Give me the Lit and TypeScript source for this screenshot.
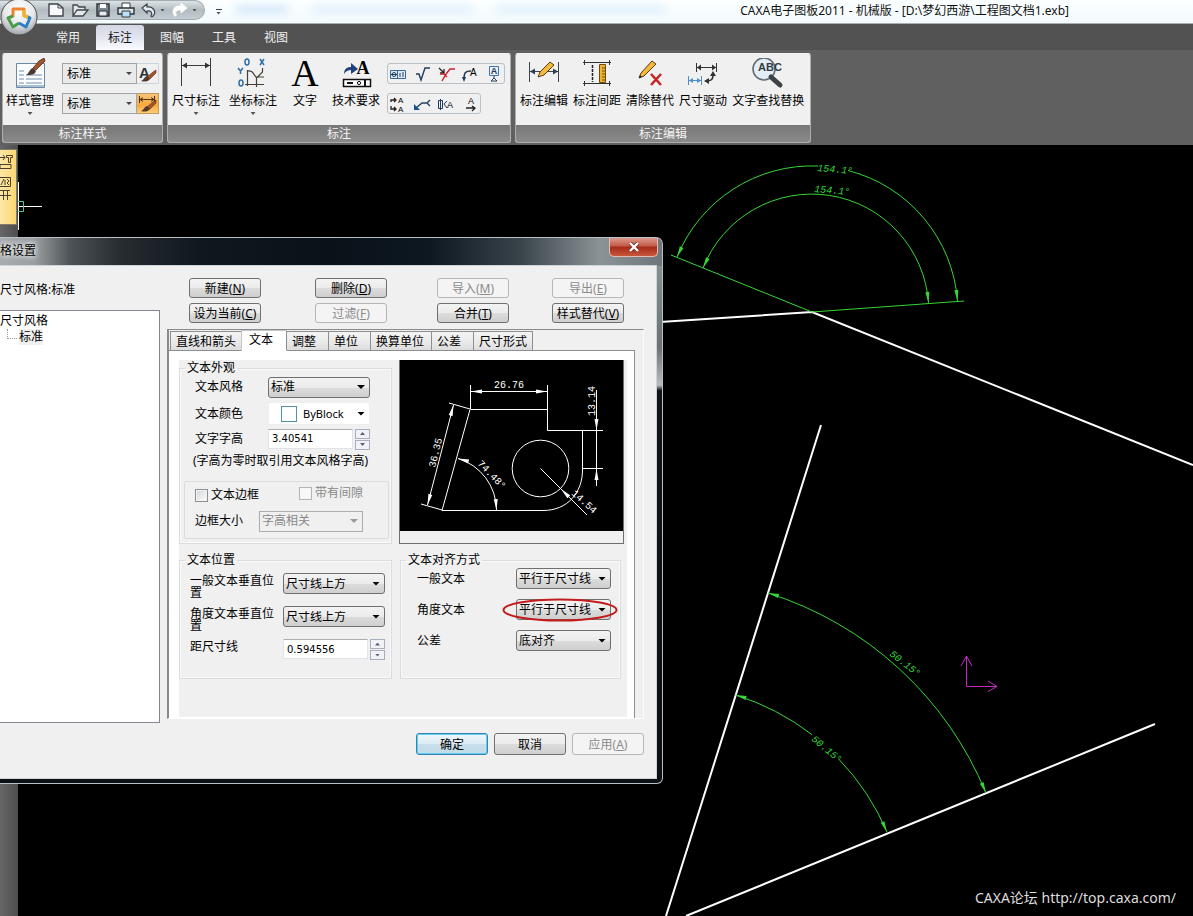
import { LitElement, html, css, svg, TemplateResult } from "lit";
import { customElement } from "lit/decorators.js";
import { classMap } from "lit/directives/class-map.js";

/* ---------- Icons ---------- */

const logo = html`<svg viewBox="0 0 38 38" class="fill" aria-hidden="true">
  <defs>
    <radialGradient id="orb" cx=".5" cy=".3" r=".75">
      <stop offset="0" stop-color="#fff" /><stop offset=".55" stop-color="#e6e8ea" /><stop offset="1" stop-color="#8f969b" />
    </radialGradient>
  </defs>
  <circle cx="19" cy="19" r="18" fill="url(#orb)" stroke="#4b4b4b" />
  <g fill="none" stroke-width="3" stroke-linejoin="round">
    <path d="M13 19V11h11v7" stroke="#ee8430" />
    <path d="M13 18l-5 2 5 9 6-4" stroke="#4e9c4b" />
    <path d="M25 18l5 2-4 9-7-4" stroke="#2b7fc4" />
    <path d="M24 12v6l4 1" stroke="#f1b52c" />
  </g>
</svg>`;

const brush = svg`<path d="M22 3l5-3 1 3-9 9-3-2z" fill="#a4552c" stroke="#43241a" stroke-width=".8"/><path d="M16 10l3 3c-1 4-5 4-10 4 3-1 3-6 7-7z" fill="#4c382f"/>`;

const smallBrush = svg`<path d="M19 9l3-2v3l-6 6-3-2z" fill="#a4552c" stroke="#5b2d17" stroke-width=".6"/><path d="M13 13l3 3c-2 3-6 3-9 2 3-1 3-4 6-5z" fill="#55392c"/>`;

const icons: Record<string, TemplateResult> = {
  newDoc: html`<svg width="18" height="16" viewBox="0 0 18 16"><path d="M2 2h9l5 4v8H2z" fill="#f7f8fa" stroke="#3f444b" stroke-width="1.4" /><path d="M11 2v4h5" fill="none" stroke="#3f444b" /></svg>`,
  open: html`<svg width="18" height="16" viewBox="0 0 18 16"><path d="M2 14V3h4l2 2h6v3M2 14l4-6h11l-5 6z" fill="#e4e8ed" stroke="#3f444b" stroke-width="1.3" /></svg>`,
  save: html`<svg width="16" height="16" viewBox="0 0 16 16"><path d="M2 2h12v12H2z" fill="#7c858e" stroke="#2e3338" stroke-width="1.4" /><path d="M5 2h6v4H5z" fill="#fff" /><path d="M4 9h8v5H4z" fill="#e7eaee" stroke="#2e3338" /></svg>`,
  print: html`<svg width="18" height="16" viewBox="0 0 18 16"><path d="M5 1h8v6H5z" fill="#fff" stroke="#363b41" /><path d="M1 6h16v6H1z" fill="#dce1e6" stroke="#2e3338" stroke-width="1.4" /><path d="M5 9h8v6H5z" fill="#b9e1f5" stroke="#363b41" /></svg>`,
  undo: html`<svg width="16" height="16" viewBox="0 0 16 16"><path d="M1 6l5-4v3c6-1 10 5 6 9-1 1-2 1-2 0 2-3 0-6-4-5v2z" fill="#e6eef4" stroke="#3f444b" stroke-width="1.2" /></svg>`,
  redo: html`<svg width="18" height="16" viewBox="0 0 18 16"><path d="M16 6l-6-5v3C4 3 0 8 3 13c1 2 3 1 2-1-1-3 1-4 5-4v3z" fill="#fff" stroke="#f7f9fa" /></svg>`,
  styleManage: html`<svg width="34" height="34" viewBox="0 0 34 34"><path d="M3.500 5.500h28v24h-28z" fill="#fbfcfe" stroke="#6b88a5" /><path d="M4 27h27v2H4z" fill="#a9bfd3" /><path d="M6 13h5M6 17h5M6 21h5M6 25h5M13 17h16M13 21h16M13 25h16" stroke="#6f8eae" /><g transform="translate(4 0)">${brush}</g></svg>`,
  dim: html`<svg width="34" height="34" viewBox="0 0 34 34"><path d="M2.500 0v28M31.500 0v28M3 7.500h28" stroke="#3c3c3c" fill="none" /><path d="M3 7.500l5-3v6zM31 7.500l-5-3v6z" fill="#333" /></svg>`,
  coord: html`<svg width="34" height="34" viewBox="0 0 34 34"><path d="M11.500 12v16M9 26.500h19M11 13c6-1 6 3 9 6h8M20.500 29v-9l6-6v-4" stroke="#45403a" fill="none" stroke-width="1.200" /><g stroke="#2e6da8" stroke-width="1.500" fill="none"><ellipse cx="11" cy="4" rx="2" ry="3" /><path d="M24 1l4 6M28 1l-4 6M2 10l2.500 3 2.500-3M4.500 13v3" /><ellipse cx="5" cy="25" rx="2" ry="3" /></g></svg>`,
  letter: html`<svg width="34" height="34" viewBox="0 0 34 34" overflow="visible"><text x="17" y="28" text-anchor="middle" font-family="Liberation Serif, serif" font-size="38">A</text></svg>`,
  tech: html`<svg width="34" height="34" viewBox="0 0 34 34"><path d="M5 16c0-6 4-7 7-7V5l7 6-7 5v-4c-3 0-5 1-7 4z" fill="#20427a" /><text x="24" y="16" text-anchor="middle" font-family="Liberation Serif, serif" font-weight="700" font-size="18">A</text><path d="M4.500 21.500h27v7h-27z" fill="#fff" stroke="#111" stroke-width="1.500" /><path d="M8 25h6M26 22v6" stroke="#111" stroke-width="2" /><circle cx="20" cy="25" r="1.600" fill="none" stroke="#111" /></svg>`,
  dimEdit: html`<svg width="34" height="34" viewBox="0 0 34 34"><path d="M2.500 4v20M31.500 4v20M3 13.500h28" stroke="#3c4450" fill="none" /><path d="M3 13.500l5-3v6zM31 13.500l-5-3v6z" fill="#333c48" /><path d="M11 19l2-5L23 4l4 3-10 10z" fill="#f6b93b" stroke="#5a3b12" /></svg>`,
  dimGap: html`<svg width="34" height="34" viewBox="0 0 34 34"><path d="M3 4.500h28M3 25.500h28M4.500 2v5M29.500 2v5M4.500 23v5M29.500 23v5" stroke="#333" fill="none" /><path d="M12.500 7v17" stroke="#222" stroke-dasharray="3 1" stroke-width="1.500" /><path d="M19.500 6.500h6v18h-6z" fill="#f5b52a" stroke="#6d4b12" /><path d="M22 10h3M22 13h3M22 16h3M22 19h3M22 22h3" stroke="#6d4b12" /></svg>`,
  clear: html`<svg width="34" height="34" viewBox="0 0 34 34"><path d="M6 20l2-5L19 3l4 3-12 12z" fill="#f6b93b" stroke="#5a3b12" /><path d="M6 20l1-3 2 2z" fill="#222" /><path d="M18 16l10 11M28 16L18 27" stroke="#c52525" stroke-width="2.600" /></svg>`,
  drive: html`<svg width="34" height="34" viewBox="0 0 34 34"><path d="M10.500 5v9M30.500 5v9M11 9.500h19" stroke="#333" fill="none" /><path d="M11 9.500l4-3v6zM30 9.500l-4-3v6z" fill="#333" /><path d="M2.500 18v9M15.500 18v9M3 22.500h12" stroke="#4d8dc9" fill="none" /><path d="M3 22.500l4-2.500v5zM15 22.500l-4-2.500v5z" fill="#4d8dc9" /><path d="M20 23c6 0 7-2 7-6" stroke="#333" stroke-width="1.600" fill="none" /><path d="M18 23l5-3v6zM27 13l-3 5h6z" fill="#333" /></svg>`,
  find: html`<svg width="34" height="34" viewBox="0 0 34 34"><circle cx="13" cy="11" r="11" fill="#e3eef5" stroke="#646c72" stroke-width="1.600" /><path d="M20 19l9 8" stroke="#3c4247" stroke-width="5" stroke-linecap="round" /><text x="19" y="13" text-anchor="middle" font-family="Liberation Sans, sans-serif" font-weight="700" font-size="11" fill="#333b42">ABC</text></svg>`,
  aBrush: html`<svg width="22" height="22" viewBox="0 0 22 22"><text x="3" y="15" font-family="Liberation Sans, sans-serif" font-weight="700" font-size="15" fill="#2e3438">A</text><g transform="translate(-2)">${smallBrush}</g></svg>`,
  dimBrush: html`<svg width="22" height="22" viewBox="0 0 22 22"><path d="M3.500 3v7M18.500 3v7M4 6.500h14M4 6.500l3-2M4 6.500l3 2M18 6.500l-3-2M18 6.500l-3 2" stroke="#503415" fill="none" /><g transform="translate(-2)">${smallBrush}</g></svg>`,
  tolerance: html`<svg width="20" height="18" viewBox="0 0 20 18"><path d="M2.500 5.500h15v8h-15zM9.500 5.500v8" fill="#dce9f6" stroke="#3d6793" /><circle cx="6" cy="9.500" r="2" fill="none" stroke="#26415f" /><path d="M3 9.500h6M12 8v4M15 7v5" stroke="#26415f" /></svg>`,
  rough: html`<svg width="20" height="18" viewBox="0 0 20 18"><path d="M4 9h3l2 6 4-12h5" fill="none" stroke="#223a5c" stroke-width="1.400" /></svg>`,
  weld: html`<svg width="20" height="18" viewBox="0 0 20 18"><path d="M3 3l5 5M8 4v4H4" fill="none" stroke="#222" stroke-width="1.300" /><path d="M6 16l4-7M4 9h4l3 3M10 9l4-5h5" fill="none" stroke="#c8262c" stroke-width="1.500" /></svg>`,
  leader: html`<svg width="20" height="18" viewBox="0 0 20 18"><path d="M4 14c0-6 1-8 7-8" fill="none" stroke="#223a5c" stroke-width="1.400" /><path d="M4 17l-2-5h4z" fill="#223a5c" /><text x="10" y="11" font-family="Liberation Sans, sans-serif" font-size="10">A</text></svg>`,
  datum: html`<svg width="20" height="18" viewBox="0 0 20 18"><path d="M5.500 1.500h9v9h-9z" fill="#e9f1fa" stroke="#3f76ad" /><text x="10" y="9" text-anchor="middle" font-family="Liberation Sans, sans-serif" font-size="9" font-weight="700" fill="#223a5c">A</text><path d="M10 11v2M7 16l3-3 3 3z" stroke="#223a5c" fill="#fff" /></svg>`,
  cut: html`<svg width="20" height="18" viewBox="0 0 20 18"><path d="M3 7V5h5M3 11v3h5M6 3l2 2-2 2M6 12l2 2-2 2" fill="none" stroke="#222" stroke-width="1.300" /><text x="10" y="8" font-family="Liberation Sans, sans-serif" font-size="8">A</text><text x="10" y="17" font-family="Liberation Sans, sans-serif" font-size="8">A</text></svg>`,
  arrowLead: html`<svg width="20" height="18" viewBox="0 0 20 18"><path d="M4 13l6-5h5l3-3M15 8l3 3" fill="none" stroke="#26415f" stroke-width="1.400" /><path d="M2 15V9l6 6z" fill="#1d4f91" /></svg>`,
  section: html`<svg width="20" height="18" viewBox="0 0 20 18"><path d="M2.500 5.500h4v8h-4zM4.500 4v11M11 6l-3 3 3 4" fill="none" stroke="#223a5c" /><text x="11" y="13" font-family="Liberation Sans, sans-serif" font-size="9">A</text></svg>`,
  direction: html`<svg width="20" height="18" viewBox="0 0 20 18"><text x="11" y="9" text-anchor="middle" font-family="Liberation Sans, sans-serif" font-size="9">A</text><path d="M6 13h9M12 11l3 2-3 3" fill="none" stroke="#222" stroke-width="1.300" /></svg>`,
};

/* ---------- Shared control look ---------- */

const shared = css`
  * { box-sizing: border-box; }
  button, select, input { font: inherit; color: inherit; margin: 0; }
  button { padding: 0; border: 0; background: none; white-space: nowrap; }
  svg { display: block; }
  .fill { width: 100%; height: 100%; }
  .drop { display: grid; align-items: center; }
  .drop > select { grid-area: 1 / 1; width: 100%; appearance: none; border-radius: 0; outline: 0; }
  .drop::after {
    content: ""; grid-area: 1 / 1; justify-self: end; margin-right: 5px;
    width: 8px; height: 4px; background: currentColor;
    clip-path: polygon(0 0, 100% 0, 50% 100%); pointer-events: none;
  }
`;

/* ---------- Ribbon ---------- */

@customElement("app-ribbon")
export class AppRibbon extends LitElement {
  static styles = [shared, css`
    :host { display: block; background: #606060; position: relative; }
    .title { display: flex; height: 24px; background: linear-gradient(#fbffff, #f3fbfd); border-bottom: 1px solid #a9afb1; }
    .quick {
      display: flex; align-items: center; gap: 6px; height: 20px; width: 205px; padding: 0 4px 0 47px;
      border: 1px solid #a4acb1; border-left: 0; border-radius: 0 10px 10px 0;
      background: linear-gradient(#dde3e6, #b2bcc1 50%, #c4cdd1);
    }
    .quick button { flex: none; }
    .quick .tight { margin-right: -3px; }
    .mini { width: 5px; height: 3px; background: #555; clip-path: polygon(0 0, 100% 0, 50% 100%); }
    .more { align-self: center; margin: 0 14px 0 11px; padding-top: 2px; border-top: 1px solid #444; width: 6px; }
    .glass { display: flex; gap: 24px; align-items: center; filter: blur(4px); height: 18px; flex: 1; min-width: 0; overflow: hidden; }
    .glass i { height: 7px; background: #cfe4f9; width: 52px; }
    .glass i + i { width: 160px; background: #deeefb; }
    .glass i + i + i { width: 170px; }
    .caption { margin: 0 124px 0 0; font-size: 12px; line-height: 22px; color: #111; white-space: nowrap; font-weight: 400; }
    .orb { position: absolute; left: 0; top: -2px; width: 38px; height: 38px; z-index: 2; }
    .tabs { display: flex; padding: 1px 0 0 44px; height: 26px; background: #525252; color: #f0f0f0; }
    .tabs button { width: 48px; margin-right: 4px; line-height: 25px; border-radius: 3px 3px 0 0; }
    .tabs .on { color: #111; background: linear-gradient(#d3d7e2, #e3e6f0 50%, #fbfbff); }
    .groups { display: flex; gap: 4px; padding: 3px 2px 2px; height: 95px; }
    .group { border: 1px solid #f2f2f2; border-radius: 3px; overflow: hidden; display: flex; flex-direction: column; background: #f0f0f0; border-color: #f2f2f2 #adadad #adadad; }
    .tools { display: flex; flex: 1; padding: 4px 5px 0 4px; }
    .name { height: 17px; line-height: 17px; text-align: center; color: #f5f5f5; font-weight: 400; font-size: 12px; margin: 0; background: linear-gradient(#777, #8a8a8a); }
    .big { display: flex; flex-direction: column; align-items: center; line-height: 18px; height: 64px; }
    .big .mini { margin-top: 2px; }
    .pair { display: flex; flex-direction: column; align-items: flex-start; gap: 9px; margin: 5px 0 0 7px; }
    .g1 .tools { padding: 4px 3px 0; }
    .g1 .pair { margin-left: 8px; }
    .line { display: flex; height: 21px; }
    .line .drop { width: 75px; color: #444; }
    .line select { height: 21px; border: 1px solid #a0a4a8; background: #e9eaea; padding: 0 4px; color: #000; }
    .line .drop::after { width: 6px; height: 3px; }
    .line button { width: 22px; border: 1px solid #ccd5dc; border-left: 0; }
    .line svg { margin: -1px 0 0 -1px; }
    .line .lit { background: linear-gradient(#f6c478, #f9a83c 60%, #fdcf75); border-color: #c29a5c; }
    .g2 .big + .big { margin-left: 9px; }
    .g2 .big.text { width: 48px; margin-left: 4px; }
    .g2 .big.text + .big { margin-left: 3px; }
    .box { display: flex; align-items: center; gap: 4px; height: 21px; border: 1px solid #b9c0c6; border-radius: 3px; }
    .g3 .tools { gap: 5px; padding-right: 6px; }
  `];

  private big(icon: string, label: string, arrow = false, cls = "") {
    return html`<button class="big ${cls}">${icons[icon]}<span>${label}</span>${arrow ? html`<span class="mini"></span>` : ""}</button>`;
  }

  private tool(icon: string, label: string) {
    return html`<button aria-label=${label}>${icons[icon]}</button>`;
  }

  render() {
    return html`
      <button class="orb" aria-label="菜单">${logo}</button>
      <header class="title">
        <div class="quick">
          ${this.tool("newDoc", "新建")}${this.tool("open", "打开")}${this.tool("save", "保存")}${this.tool("print", "打印")}
          <button class="tight" aria-label="撤销">${icons.undo}</button><span class="mini"></span>
          <button class="tight" aria-label="恢复">${icons.redo}</button><span class="mini"></span>
        </div>
        <div class="more"><div class="mini"></div></div>
        <div class="glass"><i></i><i></i><i></i></div>
        <h1 class="caption">CAXA电子图板2011 - 机械版 - [D:\\梦幻西游\\工程图文档1.exb]</h1>
      </header>
      <nav class="tabs">
        ${["常用", "标注", "图幅", "工具", "视图"].map((t) => html`<button class=${classMap({ on: t === "标注" })}>${t}</button>`)}
      </nav>
      <div class="groups">
        <section class="group g1">
          <div class="tools">
            ${this.big("styleManage", "样式管理", true)}
            <div class="pair">
              <div class="line"><span class="drop"><select aria-label="文本样式"><option>标准</option></select></span><button aria-label="文本样式管理">${icons.aBrush}</button></div>
              <div class="line"><span class="drop"><select aria-label="尺寸样式"><option>标准</option></select></span><button class="lit" aria-label="尺寸样式管理">${icons.dimBrush}</button></div>
            </div>
          </div>
          <h2 class="name">标注样式</h2>
        </section>
        <section class="group g2">
          <div class="tools">
            ${this.big("dim", "尺寸标注", true)}${this.big("coord", "坐标标注", true)}${this.big("letter", "文字", false, "text")}${this.big("tech", "技术要求")}
            <div class="pair">
              <div class="box">${this.tool("tolerance", "形位公差")}${this.tool("rough", "粗糙度")}${this.tool("weld", "焊接符号")}${this.tool("leader", "引出说明")}${this.tool("datum", "基准代号")}</div>
              <div class="box">${this.tool("cut", "剖切符号")}${this.tool("arrowLead", "倒角标注")}${this.tool("section", "中心孔标注")}${this.tool("direction", "向视符号")}</div>
            </div>
          </div>
          <h2 class="name">标注</h2>
        </section>
        <section class="group g3">
          <div class="tools">
            ${this.big("dimEdit", "标注编辑")}${this.big("dimGap", "标注间距")}${this.big("clear", "清除替代")}${this.big("drive", "尺寸驱动")}${this.big("find", "文字查找替换")}
          </div>
          <h2 class="name">标注编辑</h2>
        </section>
      </div>`;
  }
}

/* ---------- Drawing ---------- */

/* Filled arrow head with its tip at (x, y); deg is the direction it points in. */
const head = (x: number, y: number, deg: number, len = 11) =>
  svg`<path d=${`M0 0L${-len} -2V2z`} transform=${`translate(${x} ${y}) rotate(${deg})`} fill="currentColor" stroke="none" />`;

const note = (x: number, y: number, deg: number, text: string) =>
  svg`<text transform=${`translate(${x} ${y}) rotate(${deg})`} class="dimtext">${text}</text>`;

@customElement("app-drawing")
export class AppDrawing extends LitElement {
  static styles = css`
    :host { display: block; background: #000; overflow: hidden; }
    svg { display: block; width: 100%; height: 100%; }
    .green { color: #36d636; stroke: currentColor; fill: none; stroke-width: 1; }
    .dimtext { font: italic 10px "Liberation Mono", monospace; fill: currentColor; stroke: none; }
    .white { stroke: #fff; fill: none; stroke-width: 2; }
  `;

  render() {
    return html`<svg aria-label="工程图">
      <g transform="translate(0 -145)">
        <g class="white">
          <path d="M660 322L812 312L1193 465" />
          <path d="M821 425L666 916M686 916L1155 724" />
        </g>
        <g class="green">
          <path d="M671 255L812 312L964 301" />
          <path d="M677 257A146 146 0 0 1 818 166M848 170.500A146 146 0 0 1 957.500 301" />
          <path d="M703 268A117 117 0 0 1 928.500 303" />
          <path d="M768 593A349 349 0 0 1 986 793" />
          <path d="M735.500 695A242 242 0 0 1 812 734.700M838.500 758.800A242 242 0 0 1 887 832" />
          ${head(677, 257, 115)}${head(957.5, 301, 84)}${head(703, 268, 116)}${head(928.5, 303, 84)}
          ${head(768, 593, 196)}${head(986, 793, 67)}${head(735.5, 695, 196)}${head(887, 832, 66)}
          ${note(817, 171, 5, "154.1°")}${note(814, 192, 5, "154.1°")}
          ${note(889, 655, 38, "50.15°")}${note(811, 740, 40, "50.15°")}
        </g>
        <path d="M966.500 656V686.500H997M961 666l5.500-10 5.500 10M988 681l9 5.500-9 5" fill="none" stroke="#c22ac2" />
        <path d="M18.500 182v48M18 206.500h24" stroke="#fff" />
        <path d="M18 201.500h5.500v10H18" fill="none" stroke="#4ccc88" />
      </g>
    </svg>`;
  }
}

/* ---------- Dimension style dialog ---------- */

@customElement("style-dialog")
export class StyleDialog extends LitElement {
  static styles = [shared, css`
    :host {
      display: block; padding: 0 6px 5px 0; border-radius: 0 7px 6px 0; border: 1px solid #b9c0c4; border-left: 0;
      background: linear-gradient(#8f989c, #6a7276 20%, #b8bcbd 27%, #10151a 28%, #0b1014);
      color: #000;
    }
    .bar {
      display: flex; justify-content: space-between; height: 28px; margin-right: -6px; border-radius: 0 6px 0 0;
      background: linear-gradient(90deg, #a9adaf 0, #9a9ea0 35px, #4d5356 70px, #262c30 120px, #10181f 200px, #0a1119 330px, #0d1820 430px, #39434a 520px, #8b9396 600px, #6d767a);
    }
    .bar h2 { margin: 0; font-size: 12px; font-weight: 400; line-height: 26px; text-shadow: 0 0 6px #fff, 0 0 4px #fff; }
    .close {
      width: 49px; height: 19px; margin-right: 4px; border: 1px solid #e6b9b2; border-top: 0; border-radius: 0 0 5px 5px;
      background: linear-gradient(#dc9a8d, #c25a48 45%, #a52a17 50%, #c8573b); display: grid; place-items: center;
    }
    .body { background: #f0f0f0; outline: 1px solid #d0d4d6; padding-bottom: 23px; }
    .main { display: flex; }
    .left { width: 160px; display: flex; flex-direction: column; }
    .left > p { margin: 0; line-height: 47px; height: 44px; }
    .tree { flex: 1; background: #fff; border: 1px solid #828790; border-left: 0; padding-top: 2px; margin-bottom: -4px; }
    .tree p { margin: 0; line-height: 16px; }
    .tree .leaf { display: flex; }
    .tree .leaf::before { content: ""; width: 9px; height: 9px; margin: 0 2px 0 7px; border: 1px dotted #999; border-width: 0 0 1px 1px; }
    .tree .leaf span { background: #f0f0f0; }
    .right { flex: 1; margin: 0 12px 0 7px; }
    .btn {
      height: 20px; line-height: 19px; border: 1px solid #707070; border-radius: 3px; text-align: center;
      background: linear-gradient(#f3f3f3, #ebebeb 50%, #dcdcdc 51%, #cfcfcf);
    }
    .btn:disabled { color: #8b8b8b; border-color: #b3b7b9; background: #f4f4f4; }
    .cmds { display: grid; grid-template-columns: 126px 122px 115px 72px; row-gap: 5px; padding: 12px 0 6px 22px; }
    .cmds .btn { width: 72px; }
    .frame { border: 2px solid #8a8a8a; border-right: 1px solid #fafafa; border-width: 1px 1px 1px 2px; border-bottom-color: #fff; padding-right: 8px; }
    .tabs { display: flex; align-items: flex-end; height: 20px; padding-left: 1px; position: relative; z-index: 1; }
    .tabs button {
      height: 19px; line-height: 19px; min-width: 43px; padding: 0 7px 0 5px; text-align: left; border: 1px solid #8c8e94; border-bottom: 0; margin-right: -1px;
      background: linear-gradient(#f4f4f4, #ebebeb 50%, #dcdcdc);
    }
    .tabs button:first-child, .tabs button:last-child { padding: 0 5px; }
    .tabs button.on { background: #fff; height: 21px; margin-bottom: -1px; line-height: 18px; padding: 0 13px 2px 7px; border-color: #c4c6c9; }
    .page { background: #fff; border: 1px solid #8c8e94; border-left: 0; border-bottom: 0; padding: 9px 7px 1px 10px; }
    .sheet { background: #f0f0f0; display: grid; grid-template-columns: 213px 1fr; column-gap: 7px; padding: 0 3px 38px 0; }
    fieldset { margin: 0; padding: 0; border: 1px solid #d9dde0; min-width: 0; box-shadow: inset 0 0 0 1px #f9f9f9; }
    legend { margin-left: 5px; padding: 0 2px; line-height: 16px; }
    .row { display: grid; align-items: center; }
    .look { height: 184px; }
    .look .rows { display: grid; gap: 4px; padding: 0 21px 0 15px; }
    .look .row { grid-template-columns: 73px 102px; height: 22px; }
    .hint { margin: 2px 0 0 13px; line-height: 18px; white-space: nowrap; }
    .dd select {
      height: 21px; border: 1px solid #707070; border-radius: 3px; padding: 0 2px;
      background: linear-gradient(#f3f3f3, #ebebeb 50%, #dcdcdc 51%, #cfcfcf);
    }
    .dd select:disabled { color: #888; background: #f0f0f0; border-color: #abadb3; opacity: 1; border-radius: 0; }
    .dd.off { color: #999; }
    .dd.plain select { background: #fff; border-color: #eee; padding-left: 34px; border-radius: 0; font: 11px "Noto Sans", sans-serif; height: 23px; }
    .dd.plain::before { content: ""; grid-area: 1 / 1; z-index: 1; width: 14px; height: 14px; margin-left: 13px; border: 1px solid #5591a3; background: #fff; }
    .spin { display: flex; gap: 2px; }
    .spin input { flex: 1; min-width: 0; height: 20px; border: 1px solid #e2e3ea; border-top-color: #abadb3; padding: 0 3px; background: #fff; font: 10px "DejaVu Sans", sans-serif; border-radius: 0; }
    .spin span { display: grid; width: 15px; gap: 1px; }
    .spin button { height: 10px; border: 1px solid #a9adc0; background: #f1f2f8; display: grid; place-items: center; }
    .spin i { width: 5px; height: 3px; background: #54607c; clip-path: polygon(0 0, 100% 0, 50% 100%); }
    .spin button:first-child i { clip-path: polygon(50% 0, 100% 100%, 0 100%); }
    .sub { margin: 11px 2px 0 4px; border: 1px solid #d9dde0; border-radius: 2px; height: 58px; padding: 2px 0 0 10px; }
    .checks { display: flex; gap: 40px; height: 24px; }
    .checks label { display: flex; align-items: center; gap: 3px; line-height: 20px; height: 22px; }
    .checks label + label { color: #888; height: 18px; }
    .checks input { appearance: none; width: 13px; height: 13px; border: 1px solid #8e8f8f; background: linear-gradient(135deg, #cfd4d9, #fff); outline: 1px solid #f4f4f4; outline-offset: -2px; }
    .checks label + label input { border-color: #b5b5b5; background: #f8f8f8; }
    .sub .row { grid-template-columns: 64px 104px; margin-top: 2px; }
    .preview { border: 1px solid #6f6f6f; border-width: 0 1px 1px; background: #f0f0f0; height: 184px; width: 225px; }
    .preview svg { background: #000; color: #fff; width: 100%; height: 171px; }
    .dimtext { font: 10px "Liberation Mono", monospace; fill: #fff; stroke: none; }
    .place, .align { margin-top: 8px; height: 127px; }
    .place .rows { display: grid; gap: 6px; padding: 5px 0 0 10px; }
    .place .row { grid-template-columns: 84px 102px; column-gap: 9px; line-height: 12px; align-items: start; min-height: 27px; }
    .place .row label { padding-top: 2px; }
    .align { width: 221px; margin-left: 1px; }
    .align .rows { display: grid; gap: 10px; padding-left: 16px; }
    .align .row { grid-template-columns: 99px 95px; }
    .ring { position: relative; }
    .ring svg { position: absolute; left: -14px; top: -1px; width: 116px; height: 24px; pointer-events: none; }
    .foot { display: flex; justify-content: flex-end; gap: 6px; padding: 14px 12px 0 0; }
    .foot .btn { width: 72px; height: 22px; line-height: 21px; }
    .foot .ok { border-color: #3c7fb1; box-shadow: inset 0 0 0 1px #5fd0f0; background: linear-gradient(#eef6fa, #ddecf4 50%, #c9dfeb 51%, #bfdbe9); }
  `];

  private cmd(text: string, key: string, off = false) {
    return html`<button class="btn" ?disabled=${off}>${text}(<u>${key}</u>)</button>`;
  }

  private pick(id: string, value: string) {
    return html`<span class="drop dd"><select id=${id}><option>${value}</option></select></span>`;
  }

  private spin(id: string, value: string) {
    return html`<div class="spin"><input id=${id} .value=${value} /><span><button aria-label="增加"><i></i></button><button aria-label="减少"><i></i></button></span></div>`;
  }

  private preview() {
    return html`<svg viewBox="400 360 223 171" preserveAspectRatio="xMidYMid slice" aria-label="预览">
      <g fill="none" stroke="#fff">
        <path d="M470.500 409.500H547.500V430.500H582.500V470C582.500 492 568 510.500 543 510.500H442L470 409.500" />
        <path d="M470.500 385V409M547.500 385V410M471 391.500H547M582 430.500H603M583 468.500H603M596.500 390V486" />
        <path d="M449 403L470 409M421 504L442 510M453.500 405L427.500 505" />
        <path d="M458 458.500A54 54 0 0 1 496.500 510" />
        <circle cx="540.500" cy="468.500" r="28.300" />
        <path d="M540.500 468.500L587 515" />
        ${head(471, 391.5, 180)}${head(547, 391.5, 0)}${head(596.5, 430, 90)}${head(596.5, 469, -90)}
        ${head(453.5, 405, -75)}${head(427.5, 505, 105)}${head(458, 458.5, 196)}${head(496.5, 510, 86)}${head(561, 489, 225)}
        ${note(494, 388, 0, "26.76")}${note(595, 416, -90, "13.14")}${note(435, 468, -76, "36.35")}${note(477, 464, 46, "74.48°")}${note(571, 494, 42, "14.54")}
      </g>
    </svg>`;
  }

  render() {
    const tabs = ["直线和箭头", "文本", "调整", "单位", "换算单位", "公差", "尺寸形式"];
    return html`
      <div class="bar"><h2>格设置</h2>
        <button class="close" aria-label="关闭"><svg width="12" height="10" viewBox="0 0 12 10"><path d="M2 1l8 8M10 1L2 9" stroke="#703028" stroke-width="4" /><path d="M2 1l8 8M10 1L2 9" stroke="#fff" stroke-width="2.400" /></svg></button>
      </div>
      <div class="body">
        <div class="main">
          <div class="left">
            <p>尺寸风格:标准</p>
            <div class="tree"><p>尺寸风格</p><p class="leaf"><span>标准</span></p></div>
          </div>
          <div class="right">
            <div class="cmds">
              ${this.cmd("新建", "N")}${this.cmd("删除", "D")}${this.cmd("导入", "M", true)}${this.cmd("导出", "E", true)}
              ${this.cmd("设为当前", "C")}${this.cmd("过滤", "F", true)}${this.cmd("合并", "T")}${this.cmd("样式替代", "V")}
            </div>
            <div class="frame">
              <div class="tabs">${tabs.map((t) => html`<button class=${classMap({ on: t === "文本" })}>${t}</button>`)}</div>
              <div class="page"><div class="sheet">
                <fieldset class="look">
                  <legend>文本外观</legend>
                  <div class="rows">
                    <div class="row"><label for="style">文本风格</label>${this.pick("style", "标准")}</div>
                    <div class="row"><label for="color">文本颜色</label><span class="drop dd plain"><select id="color"><option>ByBlock</option></select></span></div>
                    <div class="row"><label for="size">文字字高</label>${this.spin("size", "3.40541")}</div>
                  </div>
                  <p class="hint">(字高为零时取引用文本风格字高)</p>
                  <div class="sub">
                    <div class="checks">
                      <label><input type="checkbox" />文本边框</label>
                      <label><input type="checkbox" disabled />带有间隙</label>
                    </div>
                    <div class="row"><label for="edge">边框大小</label><span class="drop dd off"><select id="edge" disabled><option>字高相关</option></select></span></div>
                  </div>
                </fieldset>
                <div class="preview">${this.preview()}</div>
                <fieldset class="place">
                  <legend>文本位置</legend>
                  <div class="rows">
                    <div class="row"><label for="pv">一般文本垂直位置</label>${this.pick("pv", "尺寸线上方")}</div>
                    <div class="row"><label for="pa">角度文本垂直位置</label>${this.pick("pa", "尺寸线上方")}</div>
                    <div class="row"><label for="pd">距尺寸线</label>${this.spin("pd", "0.594556")}</div>
                  </div>
                </fieldset>
                <fieldset class="align">
                  <legend>文本对齐方式</legend>
                  <div class="rows">
                    <div class="row"><label for="ag">一般文本</label>${this.pick("ag", "平行于尺寸线")}</div>
                    <div class="row"><label for="aa">角度文本</label>
                      <div class="ring">${this.pick("aa", "平行于尺寸线")}<svg viewBox="0 0 116 24"><ellipse cx="58" cy="12" rx="56.500" ry="10.500" fill="none" stroke="#c41c1c" stroke-width="2" /></svg></div>
                    </div>
                    <div class="row"><label for="at">公差</label>${this.pick("at", "底对齐")}</div>
                  </div>
                </fieldset>
              </div></div>
            </div>
          </div>
        </div>
        <div class="foot">
          <button class="btn ok">确定</button><button class="btn">取消</button>${this.cmd("应用", "A", true)}
        </div>
      </div>`;
  }
}

/* ---------- Shell ---------- */

@customElement("app-root")
export class AppRoot extends LitElement {
  static styles = [shared, css`
    :host {
      display: flex; flex-direction: column; min-height: 100vh; background: #000; overflow: hidden;
      font: 12px/16px "Noto Sans", "Noto Sans CJK SC", sans-serif;
    }
    .work { flex: 1; display: flex; position: relative; }
    .side { width: 18px; background: linear-gradient(90deg, #666, #4e4e4e); padding-top: 4px; z-index: 1; }
    .sheetbtn { display: block; width: 17px; height: 76px; border: 1px solid #817a68; border-left: 0; background: linear-gradient(90deg, #fbe6a6, #fcd873); }
    app-drawing { flex: 1; margin-left: -18px; }
    style-dialog { position: absolute; left: 0; top: 92px; width: 663px; z-index: 3; }
    .mark { position: absolute; right: 17px; bottom: 9px; color: #ddd; font-size: 14px; line-height: 18px; z-index: 2; white-space: nowrap; }
  `];

  render() {
    return html`
      <app-ribbon></app-ribbon>
      <main class="work">
        <aside class="side">
          <button class="sheetbtn" aria-label="图纸"><svg width="15" height="72" viewBox="0 0 15 72"><g fill="none" stroke="#4a4030"><path d="M0 6.500h5M3 4l2 2.500L3 9M6.500 4.500h6v2h-2v5h-2v-5h-2zM0 13.500h11v4H0z" /><path d="M0 26.500h10.500v9H0M1 34l3-6M5 29v5M7 28l2 2-2 2 2 2M0 39.500h10M0 44.500h11M3.500 39v10M7.500 39v10" /></g></svg></button>
        </aside>
        <app-drawing></app-drawing>
        <style-dialog></style-dialog>
        <span class="mark">CAXA论坛 http://top.caxa.com/</span>
      </main>`;
  }
}
